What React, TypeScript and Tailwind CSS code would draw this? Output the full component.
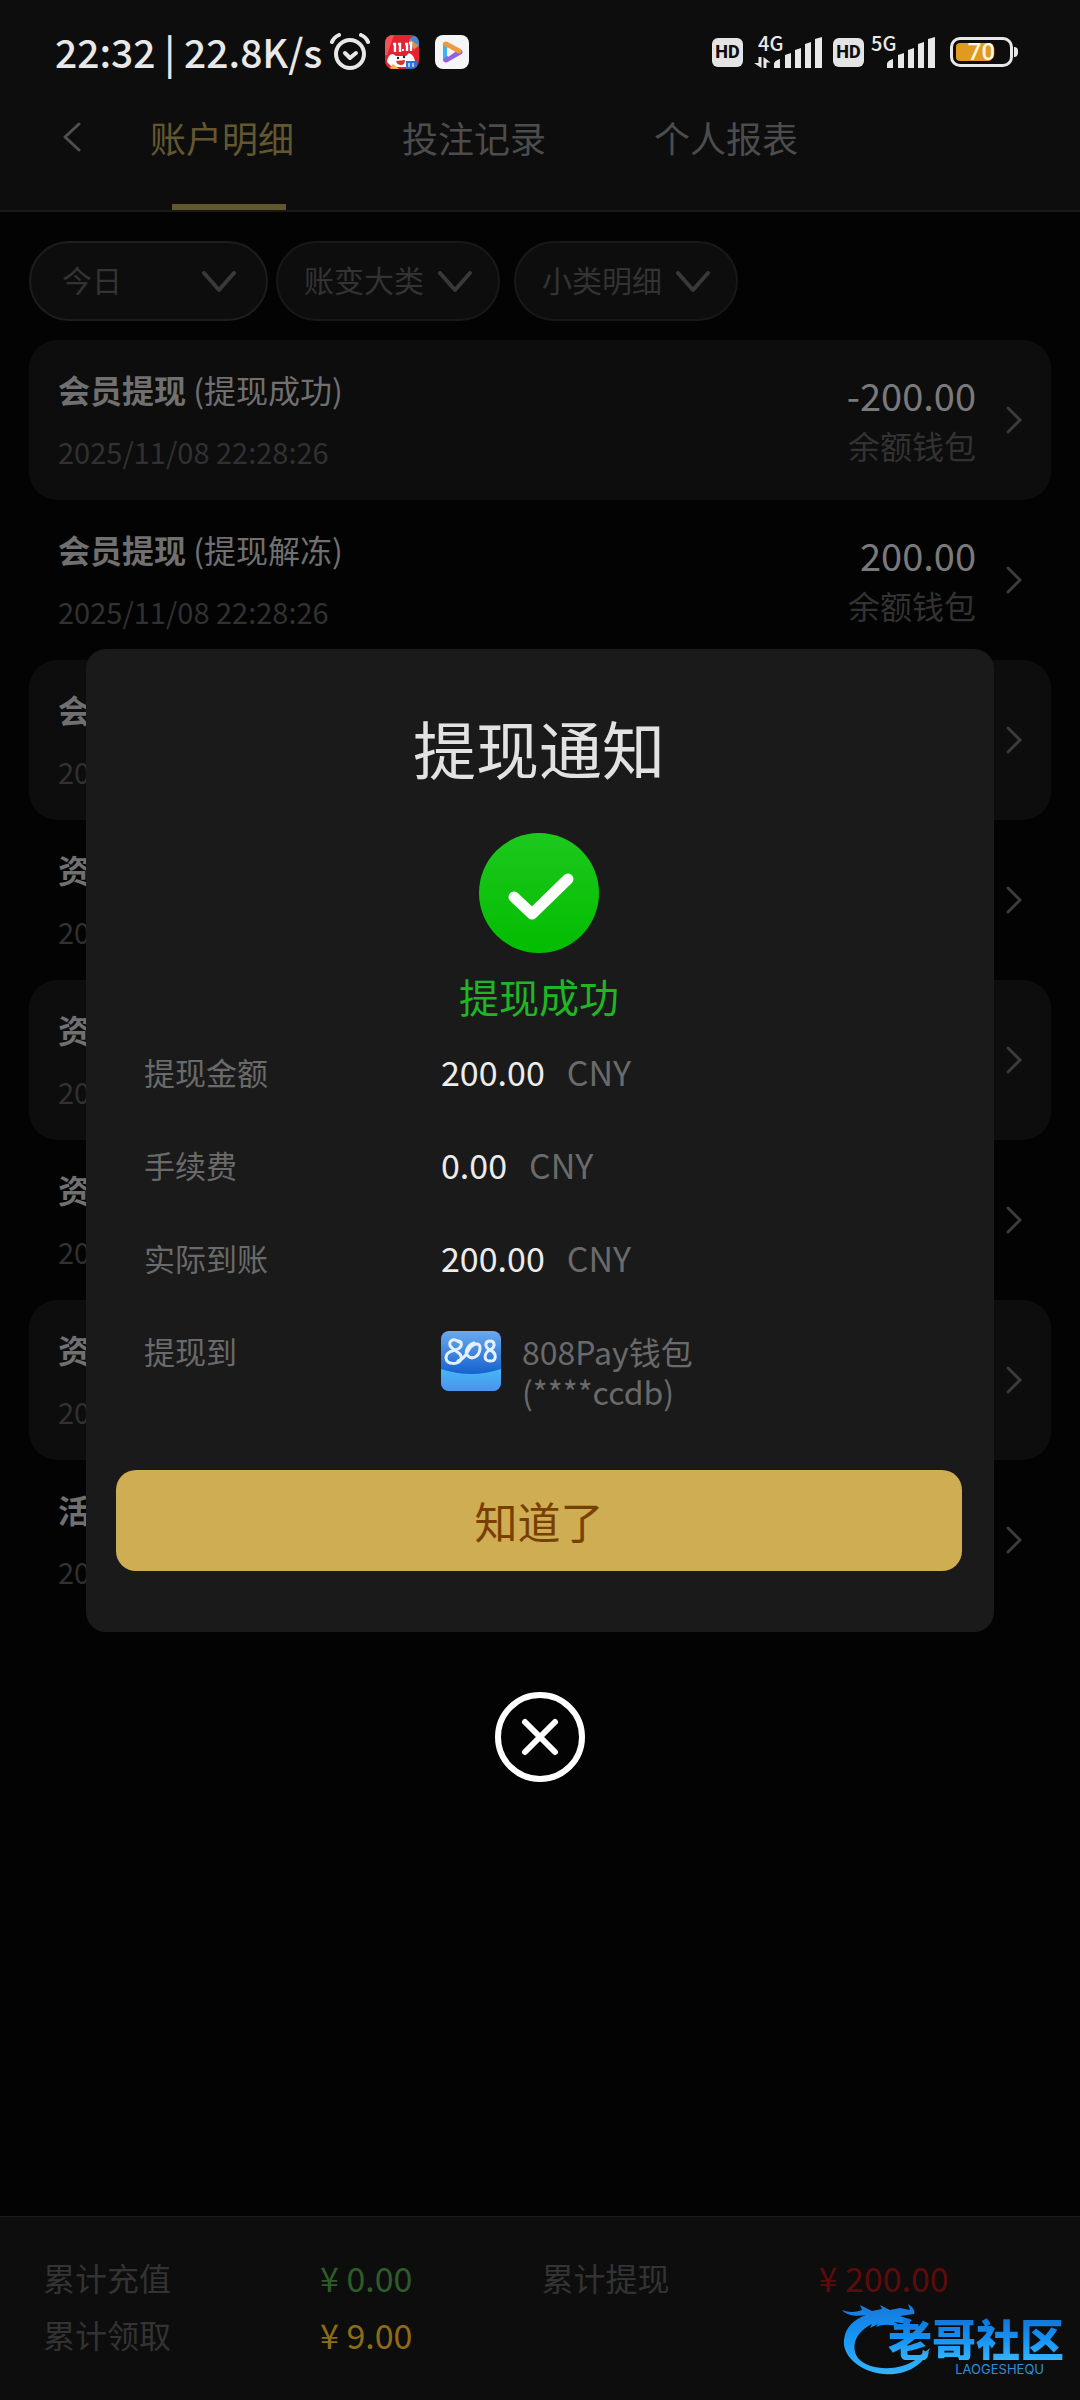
import React from "react";

type RowData = { title: string; kind?: string; date: string; amount?: string; wallet?: string };

const rows: RowData[] = [
  { title: "会员提现", kind: "(提现成功)", date: "2025/11/08 22:28:26", amount: "-200.00", wallet: "余额钱包" },
  { title: "会员提现", kind: "(提现解冻)", date: "2025/11/08 22:28:26", amount: "200.00", wallet: "余额钱包" },
  { title: "会员提现", date: "2025/11/08" },
  { title: "资金", date: "2025/11/08" },
  { title: "资金", date: "2025/11/08" },
  { title: "资金", date: "2025/11/08" },
  { title: "资金", date: "2025/11/08" },
  { title: "活动", date: "2025/11/08" },
];

function AlarmIcon() {
  return (
    <svg className="ml-2" width="40" height="38" viewBox="0 0 40 38" fill="none" stroke="#e8e8e8" strokeWidth="4" strokeLinecap="round" strokeLinejoin="round" aria-hidden="true">
      <circle cx="20" cy="21" r="14" />
      <path d="M15 20l5 5 6-5" />
      <path d="M2 9Q4 4 9 2M38 9Q36 4 31 2" />
    </svg>
  );
}

function SaleAppIcon() {
  return (
    <svg width="34" height="34" viewBox="0 0 34 34" aria-hidden="true">
      <defs>
        <clipPath id="saleClip">
          <rect width="34" height="34" rx="8" />
        </clipPath>
      </defs>
      <g clipPath="url(#saleClip)">
        <rect width="34" height="34" fill="#e5222f" />
        <path d="M0 0h9L2 20H0z" fill="#f2525c" />
        <circle cx="30" cy="7" r="6" fill="#3f8fd0" />
        <path d="M25 4l8 6-4 5z" fill="#f08a3c" />
        <path d="M8 9h2v8M13 9h2v8M20 9h2v7M24 8h2v8" stroke="#fff" strokeWidth="2.4" fill="none" />
        <rect x="17" y="14" width="2" height="2" fill="#fff" />
        <path d="M2 27q1-8 6-8l3 2h10l3-3q5 2 6 8l-5 6H7z" fill="#fff" />
        <circle cx="13" cy="23" r="1.2" fill="#222" />
        <circle cx="19" cy="22" r="1.2" fill="#222" />
        <path d="M11 26l9-1q0 5-4 5t-5-4z" fill="#d0392f" />
        <path d="M4 34l4-5 6 5z" fill="#f5b13a" />
        <rect x="21" y="26" width="11" height="8" fill="#2f6fd8" />
        <path d="M24 28v4M28 28v4" stroke="#cfe3ff" strokeWidth="1.5" />
      </g>
    </svg>
  );
}

function VideoAppIcon() {
  return (
    <svg width="34" height="34" viewBox="0 0 34 34" aria-hidden="true">
      <rect width="34" height="34" rx="8" fill="#f5f5f7" />
      <path d="M10 9v16" stroke="#3fb2f0" strokeWidth="4" strokeLinecap="round" />
      <path d="M11 25l14-8" stroke="#8f63e0" strokeWidth="5" strokeLinecap="round" />
      <path d="M11 9l13 7" stroke="#ef9a3e" strokeWidth="5" strokeLinecap="round" />
      <path d="M13 12.500l7 4.500-7 5z" fill="#f5f5f7" />
    </svg>
  );
}

function HdBadge() {
  return (
    <span className="flex h-[29px] w-[31px] items-center justify-center rounded-md bg-[#e4e4e4] font-[Roboto] text-[18px] leading-none font-extrabold text-[#0d0d0d]">
      HD
    </span>
  );
}

function Signal({ label, arrows }: { label: string; arrows?: boolean }) {
  return (
    <span className={arrows ? "relative block h-[34px] w-[68px]" : "relative block h-[34px] w-[64px]"}>
      <span className={arrows ? "absolute top-0 left-[4px] text-[20px] leading-[15px] font-medium" : "absolute top-0 left-0 text-[20px] leading-[15px] font-medium"}>
        {label}
      </span>
      <svg className="absolute right-0 bottom-0" width="68" height="34" viewBox="0 0 68 34" fill="#e8e8e8" aria-hidden="true">
        {arrows && <path d="M4.500 22h3v11L0 28h4.500zM9.500 33V22l7 5.500h-4V33z" />}
        <path d="M20 33v-4q0-3 6-5v9zM31 33V20l6-2v15zM41 33V15l6-2v20zM51 33V9l6-2v26zM61 33V4l7-2v31z" />
      </svg>
    </span>
  );
}

function Battery() {
  return (
    <span className="flex items-center">
      <span className="relative flex h-[30px] w-[63px] items-center rounded-[10px] border-[3px] border-[#e8e8e8] p-[3px]">
        <span className="h-full w-9 rounded-[4px] bg-[#e09a20]" />
        <span className="absolute inset-0 flex items-center justify-center font-[Roboto] text-[24px] leading-none font-medium text-[#fff6dc]">70</span>
      </span>
      <span className="ml-px h-2.5 w-1 rounded-r-full bg-[#e8e8e8]" />
    </span>
  );
}

function StatusBar() {
  return (
    <div className="flex h-[104px] items-center justify-between pr-[62px] pl-[55px] text-[#e8e8e8]">
      <div className="flex items-center">
        <span className="pb-0.5 text-[39px] leading-[48px] font-medium whitespace-pre">22:32 | 22.8K/s</span>
        <AlarmIcon />
        <span className="ml-[15px]">
          <SaleAppIcon />
        </span>
        <span className="ml-4">
          <VideoAppIcon />
        </span>
      </div>
      <div className="flex items-center gap-[11px]">
        <HdBadge />
        <Signal label="4G" arrows />
        <HdBadge />
        <span className="-ml-1 mr-1">
          <Signal label="5G" />
        </span>
        <Battery />
      </div>
    </div>
  );
}

function Nav() {
  const tabs = ["账户明细", "投注记录", "个人报表"];
  return (
    <nav className="flex h-[108px] border-b-2 border-[#191919] text-[36px] text-[#4c4c4c]">
      <button type="button" aria-label="返回" className="flex h-[66px] w-[150px] items-center pl-[63px]">
        <svg width="18" height="30" viewBox="0 0 18 30" fill="none" stroke="#4f4f4f" strokeWidth="3" strokeLinecap="round" strokeLinejoin="round" aria-hidden="true">
          <path d="M16 2L2 15l14 13" />
        </svg>
      </button>
      {tabs.map((t, i) => (
        <a key={t} href="#" className={i === 0 ? "relative block w-[252px] pt-1.5 leading-[54px] text-[#635730]" : "block w-[252px] pt-1.5 leading-[54px]"}>
          {t}
          {i === 0 && <span className="absolute bottom-0 left-[22px] h-1.5 w-[114px] bg-[#635730]" />}
        </a>
      ))}
    </nav>
  );
}

function Filter({ label, wide }: { label: string; wide?: boolean }) {
  return (
    <div className={wide ? "relative w-[239px]" : "relative w-[224px]"}>
      <select
        aria-label={label}
        className={
          wide
            ? "h-20 w-full appearance-none rounded-full border-2 border-[#1d1d1d] bg-[#0d0d0d] px-[31px] pb-1 text-[30px] text-[#333333]"
            : "h-20 w-full appearance-none rounded-full border-2 border-[#181818] bg-[#0d0d0d] px-[26px] pb-1 text-[30px] text-[#333333]"
        }
      >
        <option>{label}</option>
      </select>
      <svg
        className={wide ? "pointer-events-none absolute top-[30px] right-8" : "pointer-events-none absolute top-[30px] right-7"}
        width="34"
        height="22"
        viewBox="0 0 34 22"
        fill="none"
        stroke="#393939"
        strokeWidth="4"
        strokeLinecap="round"
        strokeLinejoin="round"
        aria-hidden="true"
      >
        <path d="M2 2l15 17L32 2" />
      </svg>
    </div>
  );
}

function Row({ row, filled }: { row: RowData; filled: boolean }) {
  return (
    <li>
      <button
        type="button"
        className={
          filled
            ? "flex h-[160px] w-full items-center rounded-[28px] bg-[#0d0d0d] px-[29px] text-left"
            : "flex h-[160px] w-full items-center rounded-[28px] px-[29px] text-left"
        }
      >
        <span className="flex flex-1 flex-col gap-3.5">
          <span className="text-[32px] leading-[48px] text-[#707070]">
            <span className="font-bold">{row.title}</span> {row.kind}
          </span>
          <span className="text-[29px] leading-[48px] text-[#313131]">{row.date}</span>
        </span>
        <span className="flex flex-col text-right">
          <span className="text-[38px] leading-[50px] text-[#7a7a7a]">{row.amount}</span>
          <span className="text-[32px] leading-[50px] text-[#323232]">{row.wallet}</span>
        </span>
        <svg className="ml-[30px]" width="16" height="28" viewBox="0 0 16 28" fill="none" stroke="#3c3c3c" strokeWidth="3" strokeLinecap="round" strokeLinejoin="round" aria-hidden="true">
          <path d="M2 2l12 12L2 26" />
        </svg>
      </button>
    </li>
  );
}

function PayIcon() {
  return (
    <svg width="60" height="60" viewBox="0 0 60 60" className="shrink-0" aria-hidden="true">
      <defs>
        <linearGradient id="paySky" x1="0" y1="0" x2="0" y2="1">
          <stop offset="0" stopColor="#6aaaee" />
          <stop offset="0.700" stopColor="#1763cf" />
        </linearGradient>
        <linearGradient id="payWave" x1="0" y1="0" x2="0" y2="1">
          <stop offset="0" stopColor="#46b8f6" />
          <stop offset="1" stopColor="#4a93ec" />
        </linearGradient>
        <clipPath id="payClip">
          <rect width="60" height="60" rx="8" />
        </clipPath>
      </defs>
      <g clipPath="url(#payClip)">
        <rect width="60" height="60" fill="url(#paySky)" />
        <path d="M0 38Q30 48 60 38V60H0z" fill="url(#payWave)" />
        <g fill="none" stroke="#e3f1ff" strokeWidth="3" strokeLinecap="round">
          <path d="M18 11C12 6 6 11 10 16S22 22 20 28 5 34 5 27 13 20 17 18 22 10 17 10" />
          <path d="M17 30Q23 28 27 20C31 12 40 10 39 18S31 29 27 25 27 14 33 12" />
          <path d="M49 19C43 16 44 10 49 10S55 16 49 19 42 30 49 30 56 22 49 19" />
        </g>
      </g>
    </svg>
  );
}

function Money({ label, value }: { label: string; value: string }) {
  return (
    <div className="flex">
      <dt className="w-[297px] text-[#6a6a6a]">{label}</dt>
      <dd className="text-[34px] text-[#ececec]">
        {value}
        <span className="ml-[22px] text-[#6a6a6a]">CNY</span>
      </dd>
    </div>
  );
}

function Dialog() {
  return (
    <div className="absolute inset-0 flex flex-col items-center justify-center px-[86px] pt-[30px]">
      <section role="dialog" aria-labelledby="dialog-title" className="w-full rounded-[20px] bg-[#1a1a1a] pt-[58px] pr-8 pb-[61px] pl-[30px]">
        <h2 id="dialog-title" className="text-center text-[63px] leading-[80px] text-[#e2e2e2]">
          提现通知
        </h2>
        <svg className="mx-auto mt-[46px] block" width="120" height="120" viewBox="0 0 120 120" aria-hidden="true">
          <defs>
            <linearGradient id="okFill" x1="0" y1="0" x2="0" y2="1">
              <stop offset="0" stopColor="#1dc81d" />
              <stop offset="1" stopColor="#02bd00" />
            </linearGradient>
          </defs>
          <circle cx="60" cy="60" r="60" fill="url(#okFill)" />
          <path d="M35 64l18 17 36-35" fill="none" stroke="#fff" strokeWidth="11" strokeLinecap="round" strokeLinejoin="round" />
        </svg>
        <p className="mt-[18px] text-center text-[40px] leading-[50px] text-[#1fb525]">提现成功</p>
        <dl className="mt-[31px] flex flex-col gap-[53px] pl-7 text-[31px] leading-10">
          <Money label="提现金额" value="200.00" />
          <Money label="手续费" value="0.00" />
          <Money label="实际到账" value="200.00" />
          <div className="flex text-[#6a6a6a]">
            <dt className="w-[297px]">提现到</dt>
            <dd className="flex gap-[21px] text-[32px]">
              <PayIcon />
              <span>
                808Pay钱包
                <br />
                (****ccdb)
              </span>
            </dd>
          </div>
        </dl>
        <button type="button" className="mt-[59px] flex h-[101px] w-full items-center justify-center rounded-[20px] bg-[#cfad52] text-[43px] text-[#784000]">
          知道了
        </button>
      </section>
      <button type="button" aria-label="关闭" className="mt-[60px]">
        <svg width="90" height="90" viewBox="0 0 90 90" fill="none" stroke="#fff" strokeWidth="6" strokeLinecap="round" aria-hidden="true">
          <circle cx="45" cy="45" r="42" />
          <path d="M30 30l30 30M60 30L30 60" />
        </svg>
      </button>
    </div>
  );
}

function Watermark() {
  return (
    <div className="absolute right-4 bottom-[24px] flex">
      <svg className="absolute right-[132px] bottom-0" width="90" height="72" viewBox="0 0 90 72" aria-hidden="true">
        <defs>
          <linearGradient id="dragon" x1="0" y1="0" x2="0" y2="1">
            <stop offset="0" stopColor="#1878d8" />
            <stop offset="0.400" stopColor="#1590f4" />
            <stop offset="1" stopColor="#33b4fb" />
          </linearGradient>
        </defs>
        <path
          fill="url(#dragon)"
          d="M0 6Q10 10 20 6L18 1 30 7 40 5 38 1 48 6 58 4 68 6 66 0Q74 5 72 10L58 12 70 16 66 20 52 18 60 22 48 21Q40 20 34 23L36 20 28 24 30 20C14 28 8 42 16 54 28 68 62 68 78 52L88 44C82 62 62 72 42 70 16 68 0 50 2 36 3 24 12 15 24 11 14 13 4 11 0 6z"
        />
      </svg>
      <div className="relative text-right">
        <p className="bg-gradient-to-b from-[#1272d2] via-[#1590f4] to-[#33b4fb] bg-clip-text text-[44px] leading-[44px] font-black text-transparent">老哥社区</p>
        <p className="pt-0.5 pr-5 font-[Inter] text-[13px] leading-[14px] text-[#2a8fdc]">LAOGESHEQU</p>
      </div>
    </div>
  );
}

function Footer() {
  return (
    <footer className="relative mt-auto border-t border-[#1a1a1a] bg-[#0d0d0d] pt-8 pr-10 pb-[37px] pl-[43px]">
      <div className="grid grid-cols-[5fr_4fr_5fr_4fr] text-[32px] leading-[57px] text-[#333333]">
        <span>累计充值</span>
        <span className="text-[34px] text-[#2d5c29]">¥ 0.00</span>
        <span>累计提现</span>
        <span className="text-[34px] text-[#5c0c0c]">¥ 200.00</span>
        <span>累计领取</span>
        <span className="text-[34px] text-[#8c6c14]">¥ 9.00</span>
      </div>
      <Watermark />
    </footer>
  );
}

export default function App() {
  return (
    <div className="relative flex min-h-screen flex-col bg-[#030303] font-['Noto_Sans_CJK_SC',sans-serif]">
      <header className="bg-[#0d0d0d]">
        <StatusBar />
        <Nav />
      </header>
      <main className="px-[29px] pt-[29px]">
        <div className="flex gap-2">
          <Filter label="今日" wide />
          <div className="flex gap-[14px]">
            <Filter label="账变大类" />
            <Filter label="小类明细" />
          </div>
        </div>
        <ul className="mt-[19px]">
          {rows.map((r, i) => (
            <Row key={i} row={r} filled={i % 2 === 0} />
          ))}
        </ul>
      </main>
      <Footer />
      <Dialog />
    </div>
  );
}
